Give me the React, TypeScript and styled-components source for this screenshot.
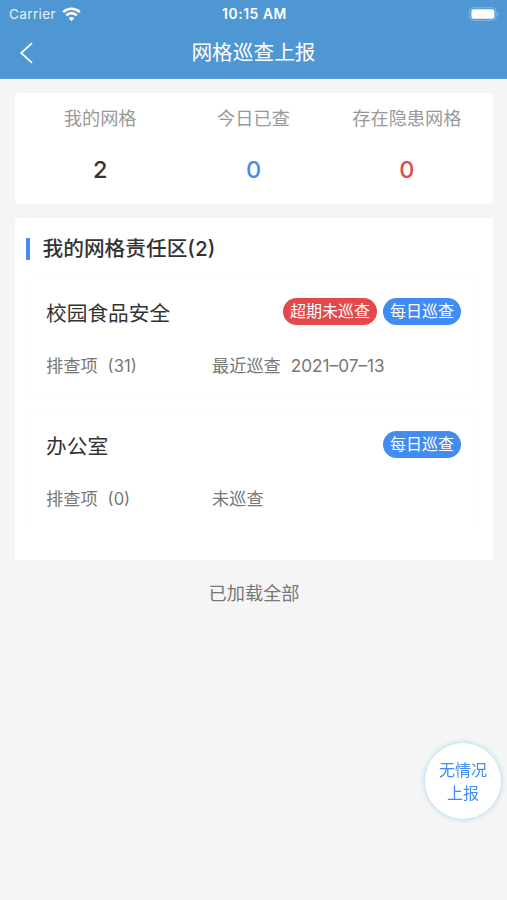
import React from "react";
import styled, { createGlobalStyle } from "styled-components";

const GlobalStyle = createGlobalStyle`
  * { box-sizing: border-box; }
  body {
    margin: 0;
    background: #f5f5f5;
    font-family: Inter, "Noto Sans CJK SC", sans-serif;
    color: #333;
  }
`;

const Screen = styled.main`
  width: 507px;
  height: 900px;
  overflow: hidden;
  background: #f5f5f5;
`;

const Header = styled.header`
  height: 79px;
  background: #4f97d3;
  border-bottom: 1px solid #5ba4e0;
  color: #fff;
`;

const StatusBar = styled.div`
  display: grid;
  grid-template-columns: 1fr auto 1fr;
  align-items: center;
  height: 27px;
  padding: 0 7px 0 9px;
  font-size: 13.6px;
  line-height: 27px;
`;

const Carrier = styled.div`
  display: flex;
  align-items: center;
  gap: 6px;
  letter-spacing: 0.35px;
  color: #e4f1fb;
`;

const Clock = styled.time`
  padding-top: 1px;
  font-size: 13.8px;
  font-weight: 600;
  letter-spacing: 0.6px;
`;

const BatterySlot = styled.div`
  display: flex;
  justify-content: flex-end;
`;

const NavBar = styled.nav`
  display: grid;
  grid-template-columns: 52px 1fr 52px;
  align-items: center;
  height: 51px;
`;

const BackButton = styled.button`
  display: flex;
  padding: 0 0 0 19px;
  border: 0;
  background: none;
  color: #fff;
`;

const Title = styled.h1`
  margin: 0;
  text-align: center;
  font-size: 20.7px;
  font-weight: 400;
  line-height: 51px;
`;

const Content = styled.div`
  padding: 14px 14px 0 15px;
`;

const Card = styled.section`
  background: #fff;
  border-radius: 3px;
`;

const Stats = styled(Card)`
  display: grid;
  grid-template-columns: repeat(3, 1fr);
  height: 111px;
  padding: 11px 9.5px 0 8.5px;
  text-align: center;
`;

const StatLabel = styled.div`
  color: #999;
  font-size: 18.2px;
  line-height: 28px;
`;

const StatValue = styled.div<{ $color: string }>`
  margin-top: 22px;
  color: ${(p) => p.$color};
  font-size: 23.5px;
  font-weight: 500;
  line-height: 32px;
`;

const Areas = styled(Card)`
  height: 342px;
  margin-top: 14px;
  padding: 15px 15px 0 14px;
  border-radius: 3px 3px 0 0;
`;

const SectionTitle = styled.h2`
  display: flex;
  align-items: center;
  gap: 12.5px;
  margin: 0 0 0 -3px;
  font-size: 20.7px;
  font-weight: 500;
  line-height: 31px;

  &::before {
    content: "";
    width: 4px;
    height: 22px;
    border-radius: 1px;
    background: #438cf0;
  }
`;

const Area = styled.article`
  height: 121px;
  margin-top: 12px;
  padding: 17px 17px 0 16px;
  border: 1px solid #fdfdfd;
  border-radius: 4px;

  & + & {
    border-bottom-color: transparent;
  }

  ${SectionTitle} + & {
    margin-top: 14px;
  }
`;

const AreaHead = styled.div`
  display: flex;
  align-items: center;
  justify-content: space-between;
  height: 34px;
`;

const AreaName = styled.h3`
  margin: 0;
  font-size: 20.7px;
  font-weight: 400;
  line-height: 34px;
  padding-top: 2px;
`;

const Tags = styled.div`
  display: flex;
  gap: 6px;
  margin: -3px -1px 0 0;
`;

const Tag = styled.span<{ $tone: "red" | "blue" }>`
  height: 27px;
  padding: 0 7px;
  border-radius: 14px;
  background: ${(p) => (p.$tone === "red" ? "#e2484c" : "#428bf0")};
  color: #fff;
  font-size: 16px;
  line-height: 26px;
`;

const Details = styled.div`
  display: grid;
  grid-template-columns: 166px 1fr;
  margin-top: 23px;
  color: #777;
  font-size: 17.2px;
  line-height: 26px;
`;

const Count = styled.span`
  margin-left: 10px;
  font-size: 16.6px;
`;

const Visit = styled.div`
  display: flex;
  gap: 10px;
`;

const EndNote = styled.p`
  margin: 19px 0 0;
  text-align: center;
  color: #777;
  font-size: 18.2px;
  line-height: 28px;
`;

const ReportButton = styled.button`
  position: fixed;
  left: 425px;
  top: 743px;
  width: 76px;
  height: 76px;
  padding: 2px 0 0;
  border: 0;
  border-radius: 50%;
  background: #fff;
  box-shadow: 0 0 5px 1px #b9dcec;
  color: #438cf0;
  font: 16px/23px Inter, "Noto Sans CJK SC", sans-serif;
`;

const stats = [
  { label: "我的网格", value: 2, color: "#333" },
  { label: "今日已查", value: 0, color: "#438cf0" },
  { label: "存在隐患网格", value: 0, color: "#e2484c" },
];

const areas = [
  { name: "校园食品安全", items: 31, overdue: true, visit: ["最近巡查", "2021–07–13"] },
  { name: "办公室", items: 0, overdue: false, visit: ["未巡查"] },
];

const WifiIcon = () => (
  <svg width="19" height="15" viewBox="0 0 19 15" fill="none" stroke="#fff" strokeWidth="2.5">
    <path d="M1.2 5.2a11.8 11.8 0 0 1 16.6 0" />
    <path d="M4.3 8.4a7.4 7.4 0 0 1 10.4 0" />
    <path d="M9.5 14.2 6.7 11.3a4 4 0 0 1 5.6 0Z" fill="#fff" stroke="none" />
  </svg>
);

const BatteryIcon = () => (
  <svg width="31" height="14" viewBox="0 0 31 14">
    <rect x="0.8" y="0.7" width="26.2" height="12.6" rx="3.8" fill="none" stroke="#85b8e3" strokeWidth="1.1" />
    <rect x="2.4" y="2.3" width="23" height="9.4" rx="2.2" fill="#fff" />
    <path d="M28.3 4.9q3 2.1 0 4.2Z" fill="#85b8e3" />
  </svg>
);

const BackIcon = () => (
  <svg width="15" height="22" viewBox="0 0 15 22" fill="none" stroke="currentColor" strokeWidth="1.7">
    <path d="M13 1.2 2.2 11 13 20.8" />
  </svg>
);

export default function App() {
  return (
    <Screen>
      <GlobalStyle />
      <Header>
        <StatusBar>
          <Carrier>
            Carrier
            <WifiIcon />
          </Carrier>
          <Clock>10:15 AM</Clock>
          <BatterySlot>
            <BatteryIcon />
          </BatterySlot>
        </StatusBar>
        <NavBar>
          <BackButton aria-label="返回">
            <BackIcon />
          </BackButton>
          <Title>网格巡查上报</Title>
        </NavBar>
      </Header>
      <Content>
        <Stats>
          {stats.map((s) => (
            <div key={s.label}>
              <StatLabel>{s.label}</StatLabel>
              <StatValue $color={s.color}>{s.value}</StatValue>
            </div>
          ))}
        </Stats>
        <Areas>
          <SectionTitle>我的网格责任区(2)</SectionTitle>
          {areas.map((a) => (
            <Area key={a.name}>
              <AreaHead>
                <AreaName>{a.name}</AreaName>
                <Tags>
                  {a.overdue && <Tag $tone="red">超期未巡查</Tag>}
                  <Tag $tone="blue">每日巡查</Tag>
                </Tags>
              </AreaHead>
              <Details>
                <span>
                  排查项<Count>({a.items})</Count>
                </span>
                <Visit>
                  {a.visit.map((v) => (
                    <span key={v}>{v}</span>
                  ))}
                </Visit>
              </Details>
            </Area>
          ))}
        </Areas>
        <EndNote>已加载全部</EndNote>
      </Content>
      <ReportButton>
        无情况
        <br />
        上报
      </ReportButton>
    </Screen>
  );
}
